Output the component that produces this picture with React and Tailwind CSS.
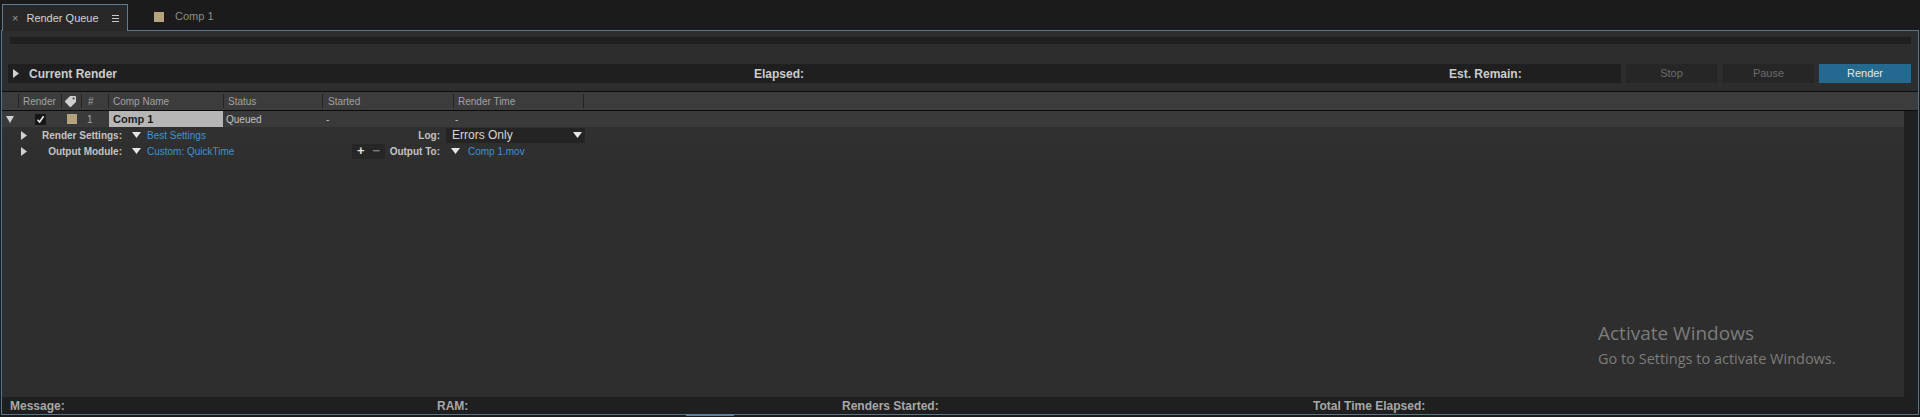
import React from "react";
import { FaTag } from "react-icons/fa";

const HEAD = [
  { label: "Render", w: "w-[43px]", pl: "pl-[4px]" },
  { label: "tag", w: "w-[20px]", pl: "pl-[3px]" },
  { label: "#", w: "w-[27px]", pl: "pl-[6px]" },
  { label: "Comp Name", w: "w-[115px]", pl: "pl-[4px]" },
  { label: "Status", w: "w-[99px]", pl: "pl-[4px]" },
  { label: "Started", w: "w-[131px]", pl: "pl-[5px]" },
  { label: "Render Time", w: "w-[130px]", pl: "pl-[4px]" },
];

function TriRight({ className = "" }) {
  return (
    <svg width="6" height="9" viewBox="0 0 6 9" className={className}>
      <polygon points="0,0 6,4.5 0,9" fill="#d0d0d0" />
    </svg>
  );
}

function TriDown({ w = 9, h = 6, color = "#e6e6e6" }) {
  return (
    <svg width={w} height={h} viewBox={`0 0 ${w} ${h}`}>
      <polygon points={`0,0 ${w},0 ${w / 2},${h}`} fill={color} />
    </svg>
  );
}

function SubLabel({ text }) {
  return (
    <div className="w-[120px] flex items-center">
      <TriRight className="ml-[19px]" />
      <span className="ml-auto font-bold text-[10px] text-[#c4c4c4]">{text}</span>
    </div>
  );
}

export default function App() {
  return (
    <div className="relative w-[1920px] h-[417px] overflow-hidden bg-[#1b1b1b] flex flex-col font-['Liberation_Sans',Arial,sans-serif]">
      {/* tabs */}
      <div className="h-[30px] flex items-end">
        <div className="ml-[2px] w-[126px] h-[27px] -mb-px relative z-10 bg-[#282828] border border-b-0 border-[#5a7c94] flex items-center">
          <span className="ml-[9px] text-[11px] text-[#9c9c9c]">×</span>
          <span className="ml-[8px] text-[11px] text-[#d4d4d4]">Render Queue</span>
          <svg width="7" height="7" viewBox="0 0 7 7" className="ml-[13px]">
            <rect x="0" y="0" width="7" height="1" fill="#c8c8c8" />
            <rect x="0" y="3" width="7" height="1" fill="#c8c8c8" />
            <rect x="0" y="6" width="7" height="1" fill="#c8c8c8" />
          </svg>
        </div>
        <div className="h-[27px] flex items-center ml-[26px]">
          <div className="w-[10px] h-[10px] bg-[#b5a37f]" />
          <span className="ml-[11px] text-[11px] text-[#8c8c8c]">Comp 1</span>
        </div>
      </div>

      {/* panel */}
      <div className="flex-1 mx-[1px] mb-[2px] border border-[#55778e] bg-[#2d2d2d] flex flex-col">
        <div className="mt-[6px] ml-[8px] mr-[7px] h-[7px] bg-[#1f1f1f]" />

        {/* current render */}
        <div className="mt-[20px] h-[19px] flex ml-[6px] mr-[7px] gap-[5px]">
          <div className="flex-1 bg-[#1f1f1f] flex items-center text-[12px] font-bold text-[#cccccc]">
            <div className="w-[746px] flex items-center">
              <TriRight className="ml-[5px]" />
              <span className="ml-[10px]">Current Render</span>
            </div>
            <div className="w-[695px]">Elapsed:</div>
            <div>Est. Remain:</div>
          </div>
          <button className="w-[91px] bg-[#262626] text-[11px] text-[#6c6c6c]">Stop</button>
          <button className="w-[91px] ml-[1px] bg-[#262626] text-[11px] text-[#6c6c6c]">Pause</button>
          <button className="w-[92px] bg-[#246a90] text-[11px] text-[#dfe9ef]">Render</button>
        </div>

        {/* table header */}
        <div className="mt-[8px] h-[20px] border-y border-[#0c0c0c] bg-[#3c3c3c] flex items-center text-[10px] text-[#a2a2a2]">
          <div className="w-[16px]" />
          {HEAD.map((h) => (
            <div key={h.label} className={`${h.w} ${h.pl} h-[14px] border-l border-[#242424] flex items-center`}>
              {h.label === "tag" ? <FaTag className="-scale-x-100 text-[#cfcfcf] text-[11px]" /> : h.label}
            </div>
          ))}
          <div className="flex-1 h-[14px] border-l border-[#242424]" />
        </div>

        {/* body */}
        <div className="flex-1 flex">
          <div className="flex-1 flex flex-col bg-[#2e2e2e]">
            <div className="h-[16px] bg-[#3a3a3a] flex items-center text-[10px] text-[#c2c2c2]">
              <div className="w-[16px] flex justify-center">
                <TriDown w={8} h={7} color="#cfcfcf" />
              </div>
              <div className="w-[43px] pl-[17px]">
                <div className="w-[11px] h-[11px] bg-[#161616] flex items-center justify-center">
                  <svg width="9" height="9" viewBox="0 0 9 9">
                    <path d="M1.5 4.8 L3.6 7 L7.6 1.2" stroke="#f2f2f2" strokeWidth="1.5" fill="none" />
                  </svg>
                </div>
              </div>
              <div className="w-[20px] pl-[6px]">
                <div className="w-[10px] h-[10px] bg-[#b5a37f]" />
              </div>
              <div className="w-[27px] pl-[6px] text-[#a8a8a8]">1</div>
              <div className="w-[115px] pl-[1px] h-full">
                <div className="h-full bg-[#b6b6b6] flex items-center pl-[4px] font-bold text-[11px] text-[#1c1c1c]">
                  Comp 1
                </div>
              </div>
              <div className="w-[99px] pl-[3px]">Queued</div>
              <div className="w-[131px] pl-[4px]">-</div>
              <div className="w-[130px] pl-[2px]">-</div>
            </div>

            <div className="h-[16px] bg-[#303030] flex items-center">
              <SubLabel text="Render Settings:" />
              <div className="w-[230px] flex items-center">
                <div className="ml-[10px]"><TriDown /></div>
                <span className="ml-[6px] text-[10px] text-[#3d93d2]">Best Settings</span>
              </div>
              <div className="w-[88px] text-right font-bold text-[10px] text-[#c4c4c4]">Log:</div>
              <div className="ml-[6px] w-[139px] h-[15px] bg-[#242424] flex items-center">
                <span className="ml-[6px] text-[12px] text-[#d6d6d6]">Errors Only</span>
                <div className="ml-auto mr-[3px]"><TriDown /></div>
              </div>
            </div>

            <div className="h-[16px] bg-[#2f2f2f] flex items-center">
              <SubLabel text="Output Module:" />
              <div className="w-[230px] flex items-center">
                <div className="ml-[10px]"><TriDown /></div>
                <span className="ml-[6px] text-[10px] text-[#3d93d2]">Custom: QuickTime</span>
              </div>
              <div className="w-[88px] flex items-center">
                <div className="w-[33px] h-[15px] bg-[#262626] flex items-center text-[13px] font-bold">
                  <span className="ml-[5px] text-[#e2e2e2]">+</span>
                  <span className="ml-[8px] text-[#7e7e7e]">−</span>
                </div>
                <span className="ml-auto font-bold text-[10px] text-[#c4c4c4]">Output To:</span>
              </div>
              <div className="ml-[11px]"><TriDown /></div>
              <span className="ml-[8px] text-[10px] text-[#3d93d2]">Comp 1.mov</span>
            </div>
          </div>
          <div className="w-[14px] bg-[#202020]" />
        </div>

        {/* status bar */}
        <div className="h-[17px] bg-[#1f1f1f] flex items-center pl-[8px] text-[12px] font-bold text-[#a8a8a8]">
          <div className="w-[427px]">Message:</div>
          <div className="w-[405px]">RAM:</div>
          <div className="w-[471px]">Renders Started:</div>
          <div>Total Time Elapsed:</div>
        </div>
      </div>

      <div className="absolute left-[686px] top-[414px] w-[48px] h-[2px] bg-[#5a829f]" />

      <div className="absolute left-[1598px] top-[324px] font-['Open_Sans','Noto_Sans',sans-serif] text-[#7c7c7c] leading-none">
        <div className="text-[19px]">Activate Windows</div>
        <div className="mt-[9px] text-[14.5px]">Go to Settings to activate Windows.</div>
      </div>
    </div>
  );
}
